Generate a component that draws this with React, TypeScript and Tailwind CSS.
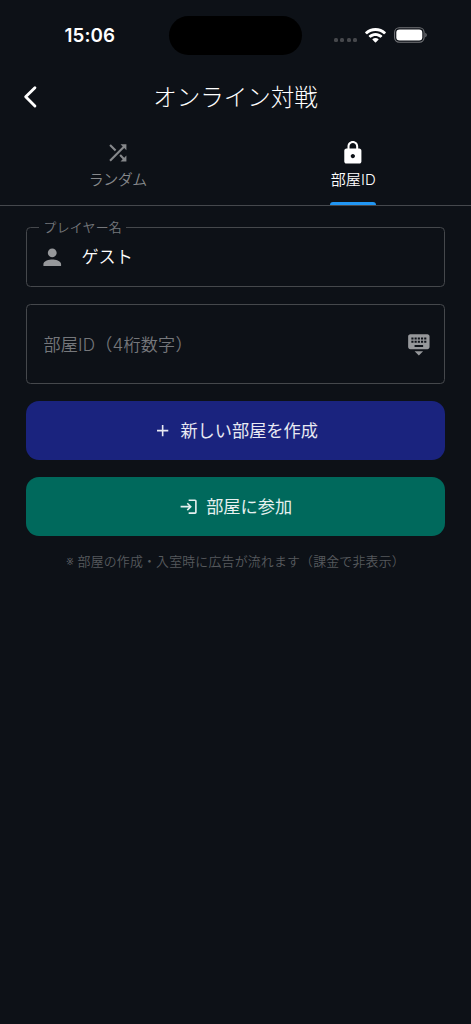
import React, { useState } from 'react';
import { MdAdd, MdKeyboardHide, MdLock, MdLogin, MdPerson, MdShuffle } from 'react-icons/md';

type TabKey = 'random' | 'room';

const tabs = [
    { key: 'random' as TabKey, label: 'ランダム', icon: MdShuffle },
    { key: 'room' as TabKey, label: '部屋ID', icon: MdLock },
];

const StatusBar: React.FC = () => (
    <div className="flex h-[70px] items-center">
        <div className="w-[169px] pt-[2px] pl-[64.5px] text-[18.8px] font-semibold tracking-[0.1px] text-white">15:06</div>
        <div className="h-[39px] w-[133px] rounded-full bg-black" />
        <div className="flex items-center pl-[32px]">
            <div className="flex gap-[2.4px] pt-[10px]">
                {[0, 1, 2, 3].map((i) => (
                    <span key={i} className="size-[4px] rounded-[1.5px] bg-[#46484c]" />
                ))}
            </div>
            <svg className="ml-[8px] h-[15px] w-[21px]" viewBox="0 0 21 15" fill="#fff">
                <path d="M10.5 0C6.6 0 3 1.5.3 4c-.3.3-.3.6 0 .9l1.2 1.2c.3.3.6.3.9 0C4.6 4.1 7.4 3 10.5 3s5.9 1.1 8.1 3.1c.3.3.6.3.9 0l1.2-1.2c.3-.3.3-.6 0-.9C18 1.5 14.4 0 10.5 0z" />
                <path d="M10.5 5C8 5 5.7 5.9 3.9 7.5c-.3.3-.3.6 0 .9l1.2 1.2c.3.3.6.3.9 0C7.2 8.5 8.8 7.9 10.5 7.9s3.3.6 4.5 1.7c.3.3.6.3.9 0l1.2-1.2c.3-.3.3-.6 0-.9C15.3 5.9 13 5 10.5 5z" />
                <path d="M10.5 9.9c-1.1 0-2.1.4-2.9 1-.3.3-.3.6 0 .9l2.4 2.5c.3.3.7.3 1 0l2.4-2.5c.3-.3.3-.6 0-.9-.8-.6-1.8-1-2.9-1z" />
            </svg>
            <svg className="ml-[7px] h-[16px] w-[34px]" viewBox="0 0 34 16" fill="none">
                <rect x="1.6" y="0.8" width="29.5" height="14.4" rx="4.6" stroke="#74767a" strokeWidth="1.1" />
                <rect x="3.3" y="2.5" width="26" height="11" rx="3.2" fill="#fff" />
                <path d="M32.3 5.7c1 .4 1.4 1.3 1.4 2.3s-.4 1.9-1.4 2.3z" fill="#74767a" />
            </svg>
        </div>
    </div>
);

const BackIcon: React.FC = () => (
    <svg className="size-[25.7px]" viewBox="0 0 24 24" fill="none" stroke="currentColor" strokeWidth="2.7" strokeLinecap="round" strokeLinejoin="round">
        <path d="M15.8 3.5 7.2 12l8.6 8.5" />
    </svg>
);

const App: React.FC = () => {
    const [activeTab, setActiveTab] = useState<TabKey>('room');
    const [playerName, setPlayerName] = useState('ゲスト');
    const [roomId, setRoomId] = useState('');

    return (
        <div className="min-h-screen w-full bg-[#0d1117] font-[Inter,'Noto_Sans_CJK_JP',sans-serif] text-white">
            <StatusBar />

            <header className="grid h-[54px] grid-cols-[60px_1fr_60px] items-center">
                <button type="button" aria-label="戻る" className="pl-[17.5px]">
                    <BackIcon />
                </button>
                <h1 className="pt-[2px] text-center text-[23.5px] leading-8 font-light">オンライン対戦</h1>
            </header>

            <div className="flex h-[82px] border-b border-[#45484d]">
                {tabs.map(({ key, label, icon: Icon }) => {
                    const active = key === activeTab;
                    return (
                        <button
                            key={key}
                            type="button"
                            onClick={() => setActiveTab(key)}
                            className={`flex flex-1 flex-col items-center pt-[16px] ${active ? 'text-white' : 'text-[#86888b]'}`}
                        >
                            <Icon size={25.7} />
                            <span
                                className={`mt-[3px] text-[15px] leading-[22px] font-[350] whitespace-nowrap ${active ? 'tracking-[0.1px]' : 'tracking-[-0.5px]'}`}
                            >
                                {label}
                            </span>
                            {active && <span className="mt-auto h-[3px] w-[46px] rounded-t-[3px] bg-[#2196f3]" />}
                        </button>
                    );
                })}
            </div>

            <main className="flex flex-col px-[26px] pt-[21px]">
                <div className="relative flex h-[60px] items-center rounded-[4.5px] border border-[#45484c] pl-[12px]">
                    <label
                        htmlFor="player"
                        className="absolute -top-[9px] left-[12px] bg-[#0d1117] px-[4.5px] text-[12.9px] leading-[18px] font-[350] tracking-[0.25px] text-[#75777b]"
                    >
                        プレイヤー名
                    </label>
                    <MdPerson size={26.5} className="shrink-0 text-[#96989b]" />
                    <input
                        id="player"
                        value={playerName}
                        onChange={(e) => setPlayerName(e.target.value)}
                        className="ml-[16px] w-[300px] bg-transparent text-[17.1px] font-[350] outline-none"
                    />
                </div>

                <div className="mt-[17px] flex h-[80px] items-center justify-between rounded-[4.5px] border border-[#45484c] pr-[12px] pl-[16.5px]">
                    <input
                        value={roomId}
                        onChange={(e) => setRoomId(e.target.value)}
                        placeholder="部屋ID（4桁数字）"
                        className="w-[300px] bg-transparent pt-px text-[17.1px] font-[350] tracking-[0.2px] outline-none placeholder:text-[#75777b]"
                    />
                    <MdKeyboardHide size={25.7} className="text-[#96989b]" />
                </div>

                <button
                    type="button"
                    className="mt-[17px] flex h-[59px] items-center justify-center gap-[8px] rounded-[13px] bg-[#1a237e] text-[17.2px] text-[#e8e9f2]"
                >
                    <MdAdd size={19.3} />
                    新しい部屋を作成
                </button>
                <button
                    type="button"
                    className="mt-[17px] flex h-[59px] items-center justify-center gap-[8px] rounded-[13px] bg-[#00695c] text-[17.2px] text-[#e6f0ef]"
                >
                    <MdLogin size={19.3} />
                    部屋に参加
                </button>

                <p className="mt-[17px] text-center text-[12.9px] leading-[18px] font-[350] tracking-[0.2px] whitespace-nowrap text-[#56595d]">
                    ※ 部屋の作成・入室時に広告が流れます（課金で非表示）
                </p>
            </main>
        </div>
    );
};

export default App;
